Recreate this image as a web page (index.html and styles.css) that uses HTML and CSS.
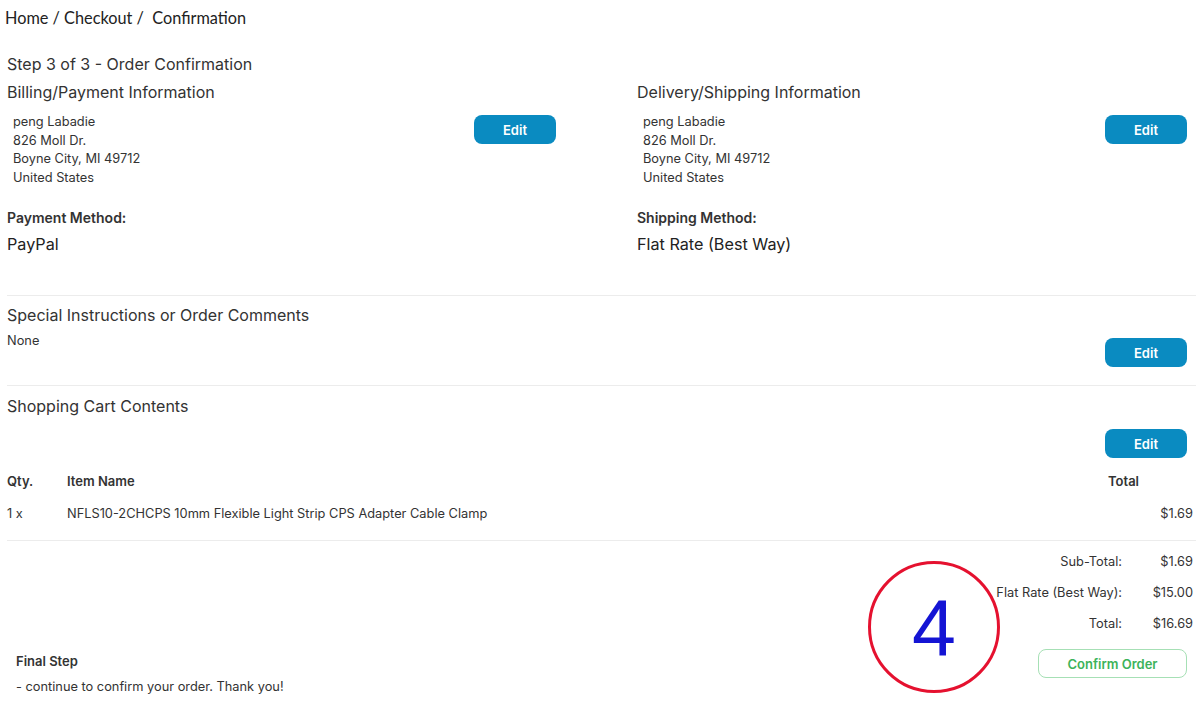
FILE: index.html
```html
<!DOCTYPE html>
<html lang="en">

<head>
    <meta charset="UTF-8">
    <meta name="viewport" content="width=device-width, initial-scale=1.0">
    <title>Checkout - Confirmation</title>
    <link rel="stylesheet" href="styles.css">
</head>

<body>
    <div class="breadcrumb">Home / Checkout / &nbsp;Confirmation</div>

    <div class="page">
        <h2 class="step-title">Step 3 of 3 - Order Confirmation</h2>

        <div class="info-cols">
            <div class="info-col">
                <h3 class="section-title">Billing/Payment Information</h3>
                <div class="address-row">
                    <div class="address">
                        peng Labadie<br>
                        826 Moll Dr.<br>
                        Boyne City, MI 49712<br>
                        United States
                    </div>
                    <button class="btn-edit">Edit</button>
                </div>
                <p class="method-label">Payment Method:</p>
                <p class="method-value">PayPal</p>
            </div>
            <div class="info-col">
                <h3 class="section-title">Delivery/Shipping Information</h3>
                <div class="address-row">
                    <div class="address">
                        peng Labadie<br>
                        826 Moll Dr.<br>
                        Boyne City, MI 49712<br>
                        United States
                    </div>
                    <button class="btn-edit">Edit</button>
                </div>
                <p class="method-label">Shipping Method:</p>
                <p class="method-value">Flat Rate (Best Way)</p>
            </div>
        </div>

        <hr>

        <div class="comments">
            <h3 class="section-title">Special Instructions or Order Comments</h3>
            <div class="comments-row">
                <p class="comment-text">None</p>
                <button class="btn-edit">Edit</button>
            </div>
        </div>

        <hr class="hr-cart">

        <div class="cart">
            <h3 class="section-title">Shopping Cart Contents</h3>
            <div class="cart-edit">
                <button class="btn-edit">Edit</button>
            </div>
            <table class="cart-table">
                <thead>
                    <tr>
                        <th class="col-qty">Qty.</th>
                        <th class="col-name">Item Name</th>
                        <th class="col-total">Total</th>
                    </tr>
                </thead>
                <tbody>
                    <tr>
                        <td class="col-qty">1 x</td>
                        <td class="col-name">NFLS10-2CHCPS 10mm Flexible Light Strip CPS Adapter Cable Clamp</td>
                        <td class="col-total price">$1.69</td>
                    </tr>
                </tbody>
            </table>
        </div>

        <hr class="hr-totals">

        <div class="totals">
            <span class="t-label">Sub-Total:</span><span class="t-value">$1.69</span>
            <span class="t-label">Flat Rate (Best Way):</span><span class="t-value">$15.00</span>
            <span class="t-label">Total:</span><span class="t-value">$16.69</span>
        </div>

        <div class="final-row">
            <div class="final-step">
                <p class="final-title">Final Step</p>
                <p class="final-text">- continue to confirm your order. Thank you!</p>
            </div>
            <button class="btn-confirm">Confirm Order</button>
        </div>

        <!-- numbered marker -->
        <div class="marker">4</div>
    </div>
</body>

</html>
```

FILE: styles.css
```css
body {
    margin: 0;
    font-family: Inter, "Liberation Sans", sans-serif;
    color: #333;
    background-color: #fff;
}

p {
    margin: 0;
}

.breadcrumb {
    font-family: Lato, "Liberation Sans", sans-serif;
    font-size: 16.3px;
    line-height: 24px;
    padding: 6px 0 0 5px;
    color: #222;
}

.page {
    position: relative;
    padding: 0 4px 0 7px;
}

.step-title,
.section-title {
    font-size: 16px;
    font-weight: 400;
    line-height: 28px;
    margin: 0;
    color: #333;
}

.step-title {
    margin-top: 20px;
}

.info-cols {
    display: grid;
    grid-template-columns: 549px 550px;
    column-gap: 81px;
}

.address-row {
    display: flex;
    justify-content: space-between;
    align-items: flex-start;
}

.address {
    font-size: 12.8px;
    line-height: 18.6px;
    padding: 7px 0 0 6px;
    color: #333;
}

.btn-edit {
    width: 82px;
    height: 29px;
    margin-top: 9px;
    border: none;
    border-radius: 8px;
    background-color: #0a8bc1;
    color: #fff;
    font-family: Inter, "Liberation Sans", sans-serif;
    font-size: 13px;
    font-weight: 600;
    cursor: pointer;
}

.method-label {
    margin-top: 22px;
    font-size: 14px;
    font-weight: 600;
    line-height: 18px;
}

.method-value {
    margin-top: 5px;
    font-size: 16.2px;
    line-height: 24px;
    color: #222;
}

hr {
    border: none;
    border-top: 1px solid #ececec;
    margin: 39px 0 5px 0;
}

.comments-row {
    display: flex;
    justify-content: space-between;
    align-items: flex-start;
    padding-right: 9px;
}

.comment-text {
    margin-top: 3px;
    font-size: 12.8px;
    line-height: 18px;
}

.comments-row .btn-edit {
    margin-top: 9px;
}

.hr-cart {
    margin: 18px 0 6px 0;
}

.cart-edit {
    display: flex;
    justify-content: flex-end;
    padding-right: 9px;
}

.cart-table {
    width: 100%;
    border-collapse: collapse;
    margin-top: 14px;
    font-size: 12.8px;
}

.cart-table th {
    font-weight: 600;
    font-size: 13px;
    text-align: left;
    line-height: 18px;
    padding: 0 0 15px 0;
}

.cart-table td {
    line-height: 18px;
    padding: 0;
}

.col-qty {
    width: 60px;
}

.col-total {
    width: 85px;
}

.cart-table .price {
    text-align: right;
    padding-right: 3px;
}

.hr-totals {
    margin: 17px 0 5px 0;
}

.totals {
    display: grid;
    grid-template-columns: auto 71px;
    justify-content: end;
    padding-right: 3px;
    font-size: 12.8px;
    line-height: 31px;
}

.t-label,
.t-value {
    text-align: right;
}

.final-row {
    display: flex;
    justify-content: space-between;
    align-items: flex-start;
    padding-right: 9px;
}

.final-step {
    padding: 13px 0 0 9px;
    font-size: 12.8px;
}

.final-title {
    font-weight: 600;
    font-size: 13px;
    line-height: 18px;
}

.final-text {
    margin-top: 8px;
    line-height: 18px;
}

.btn-confirm {
    width: 149px;
    height: 29px;
    margin-top: 10px;
    border: 1px solid #a6e0b5;
    border-radius: 8px;
    background-color: #fff;
    color: #3cb35a;
    font-family: Inter, "Liberation Sans", sans-serif;
    font-size: 13px;
    font-weight: 600;
    cursor: pointer;
}

.marker {
    position: absolute;
    left: 868px;
    bottom: 3px;
    width: 126px;
    height: 126px;
    border: 3px solid #e5112f;
    border-radius: 50%;
    display: flex;
    align-items: center;
    justify-content: center;
    font-family: "Liberation Sans", Arial, sans-serif;
    font-size: 79px;
    line-height: 1;
    color: #1414d4;
}
```
